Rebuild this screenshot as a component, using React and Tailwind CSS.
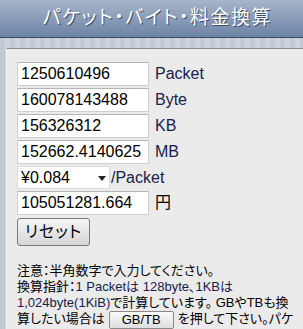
import React from 'react';

const stripes =
    'bg-[repeating-linear-gradient(90deg,#c2cad5_0px,#c2cad5_5px,#ccd3dd_5px,#ccd3dd_10px)]';

const ValueRow = ({ value, label, labelClass = 'text-[#17214a]' }) => (
    <div className="flex items-center h-[26px]">
        <input
            readOnly
            value={value}
            className="w-[132px] h-[24px] bg-white border border-[#cfcfcf] border-t-[#b5b5b5] px-[3px] text-[16px] text-black outline-none"
        />
        <span className={`ml-[6px] text-[16px] ${labelClass}`}>{label}</span>
    </div>
);

export default function App() {
    return (
        <div
            className={`w-[303px] h-[329px] overflow-hidden ${stripes}`}
            style={{ fontFamily: '"Liberation Sans", "Noto Sans CJK JP", sans-serif' }}
        >
            {/* Header */}
            <div className="h-[38px] bg-gradient-to-b from-[#a8b5c9] to-[#6d84a6] border-b border-[#3b4a60] flex items-center justify-center">
                <h1 className="text-white text-[19px] tracking-[1.5px] [font-feature-settings:'palt'] [text-shadow:1px_1px_0_#3e4c63] ml-[12px]">
                    パケット・バイト・料金換算
                </h1>
            </div>

            <div className="h-[10px]" />

            {/* Panel */}
            <div className="ml-[6px] bg-[#ebebeb] border-t border-[#8c8c8c] border-l border-l-[#f7f7f7] h-[300px] pl-[10px] pr-[6px] pt-[12px]">
                <ValueRow value="1250610496" label="Packet" />
                <ValueRow value="160078143488" label="Byte" />
                <ValueRow value="156326312" label="KB" />
                <ValueRow value="152662.4140625" label="MB" />

                <div className="flex items-center h-[25px]">
                    <div className="relative w-[93px] h-[23px] bg-white border border-[#dcdcdc] flex items-center">
                        <span className="pl-[3px] text-[16px] text-black">¥0.084</span>
                        <svg className="absolute right-[3px] top-[9px]" width="8" height="5" viewBox="0 0 8 5">
                            <path d="M0 0H8L4 5Z" fill="#222" />
                        </svg>
                    </div>
                    <span className="ml-[1px] text-[16px] text-[#17214a]">/Packet</span>
                </div>

                <ValueRow value="105051281.664" label="円" labelClass="text-black" />

                <button className="mt-[2px] w-[73px] h-[28px] rounded-[3px] border border-[#7a7a7a] bg-gradient-to-b from-[#f6f6f6] to-[#d6d6d6] text-[16px] text-black [font-feature-settings:'palt'] tracking-[1px]">
                    リセット
                </button>

                <p className="mt-[17px] text-[13px] leading-[16px] text-black [font-feature-settings:'palt']">
                    注意：半角数字で入力してください。
                    <br />
                    換算指針：
                    <span className="text-[#17214a]">1 Packetは 128byte、1KBは 1,024byte(1KiB)</span>
                    で計算しています。 GBやTBも換算したい場合は
                    <button className="mx-[4px] px-[12px] h-[18px] align-middle rounded-[2px] border border-[#8a8a8a] bg-gradient-to-b from-[#fafafa] to-[#dedede] text-[13px] leading-[16px] text-black">
                        GB/TB
                    </button>
                    を押して下さい。パケット代の単価を変更できます。
                </p>
            </div>
        </div>
    );
}
